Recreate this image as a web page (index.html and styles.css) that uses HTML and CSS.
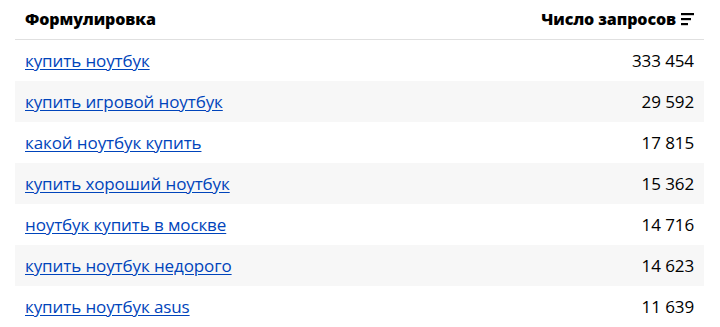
FILE: index.html
```html
<!DOCTYPE html>
<html lang="ru">
<head>
<meta charset="utf-8">
<link rel="stylesheet" href="styles.css">
</head>
<body>
<table class="table">
  <thead>
    <tr class="head">
      <th class="c-phrase">Формулировка</th>
      <th class="c-count"><span class="sort">Число запросов<svg class="sort-icon" width="13" height="14" viewBox="0 0 13 14"><rect x="0" y="1" width="13" height="2.2"/><rect x="0" y="6" width="10" height="2.2"/><rect x="0" y="11" width="7" height="2.2"/></svg></span></th>
    </tr>
  </thead>
  <tbody>
    <tr><td class="c-phrase"><a href="#">купить ноутбук</a></td><td class="c-count">333 454</td></tr>
    <tr class="alt"><td class="c-phrase"><a href="#">купить игровой ноутбук</a></td><td class="c-count">29 592</td></tr>
    <tr><td class="c-phrase"><a href="#">какой ноутбук купить</a></td><td class="c-count">17 815</td></tr>
    <tr class="alt"><td class="c-phrase"><a href="#">купить хороший ноутбук</a></td><td class="c-count">15 362</td></tr>
    <tr><td class="c-phrase"><a href="#">ноутбук купить в москве</a></td><td class="c-count">14 716</td></tr>
    <tr class="alt"><td class="c-phrase"><a href="#">купить ноутбук недорого</a></td><td class="c-count">14 623</td></tr>
    <tr><td class="c-phrase"><a href="#">купить ноутбук asus</a></td><td class="c-count">11 639</td></tr>
  </tbody>
</table>
</body>
</html>
```
FILE: styles.css
```css
html, body {
  margin: 0;
  padding: 0;
  background: #fff;
}
body {
  padding: 0 16px 0 15px;
  font-family: "Open Sans", "Noto Sans", sans-serif;
  color: #000;
}
.table {
  width: 100%;
  border-collapse: collapse;
}
.head th {
  height: 39px;
  padding: 0 10px;
  font-size: 16px;
  font-weight: 800;
  letter-spacing: -0.1px;
  border-bottom: 1px solid #e0e0e0;
  vertical-align: middle;
  box-sizing: border-box;
}
.c-phrase {
  text-align: left;
}
.c-count {
  text-align: right;
}
.sort {
  display: inline-flex;
  align-items: center;
  gap: 5px;
}
.sort-icon {
  fill: #000;
}
td {
  height: 41px;
  padding: 0 10px 0 10px;
  font-size: 17px;
  letter-spacing: -0.1px;
  vertical-align: middle;
}
tr.alt td {
  background: #f7f7f7;
}
a {
  color: #0044bb;
  text-decoration: underline;
  text-underline-offset: 2px;
}
```
